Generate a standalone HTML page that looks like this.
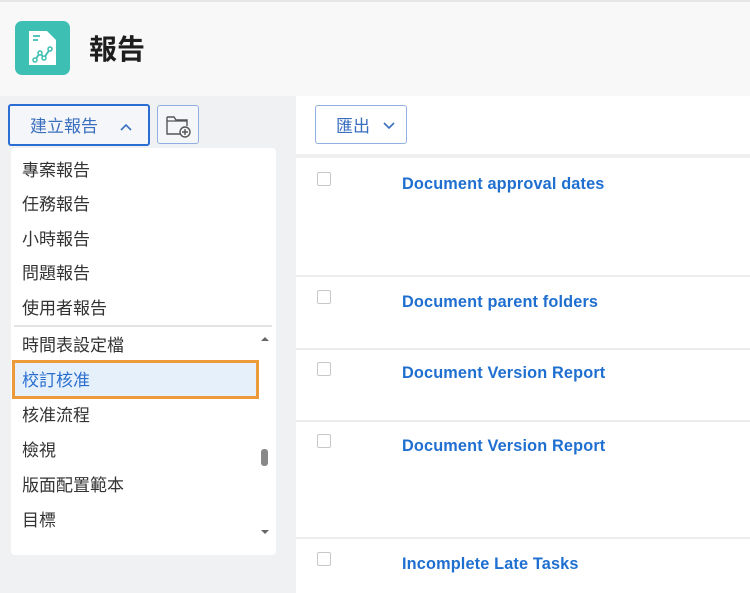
<!DOCTYPE html>
<html><head><meta charset="utf-8"><style>
*{margin:0;padding:0;box-sizing:border-box}
body{width:750px;height:593px;overflow:hidden;background:#f8f8f8;font-family:"Liberation Sans","Noto Sans CJK TC",sans-serif;position:relative}
.abs{position:absolute}
.top{left:0;top:0;width:750px;height:2px;background:#e6e6e6}
.logo{left:15px;top:21px;width:55px;height:54px;border-radius:7px;background:#3dbfb3}
.title{left:89px;top:28px;font-size:28px;font-weight:bold;color:#1e1e1e;font-family:"Noto Sans CJK TC",sans-serif;line-height:40px}
.left{left:0;top:96px;width:296px;height:497px;background:#f0f1f2}
.right{left:296px;top:96px;width:454px;height:497px;background:#fff}
.btn1{left:8px;top:104px;width:142px;height:42px;border:2px solid #2a6ed4;border-radius:3px;background:#f4f6f9;color:#3a6fc0;font-size:17px;font-family:"Noto Sans CJK TC",sans-serif;line-height:38px;padding-left:20px}
.btn2{left:157px;top:105px;width:42px;height:39px;border:1px solid #8fb0e0;border-radius:3px;background:#f4f6f9}
.btn3{left:315px;top:105px;width:92px;height:39px;border:1px solid #8fb0e0;border-radius:3px;background:#fff;color:#3a6fc0;font-size:17px;font-family:"Noto Sans CJK TC",sans-serif;line-height:37px;padding-left:20px}
.dd{left:11px;top:148px;width:265px;height:407px;background:#fff;border-radius:4px}
.it{position:absolute;left:22px;font-size:17px;color:#333;font-family:"Noto Sans CJK TC",sans-serif;line-height:20px}
.hl{left:12px;top:360px;width:247px;height:39px;background:#e6f0fb;border:3px solid #ec9a3a}
.line{left:296px;width:454px;height:2px;background:#ececec}
.cb{left:317px;width:14px;height:14px;border:1px solid #c8c8c8;border-radius:2px;background:#fff}
.lk{left:402px;font-size:16.3px;font-weight:bold;color:#1f6fd0;line-height:20px;letter-spacing:0.15px}
</style></head><body>
<div class="abs top"></div>
<div class="abs logo"><svg width="55" height="54" viewBox="0 0 55 54"><path d="M14 10h18l9 9v25H14z" fill="#fff"/><path d="M18 15h7M18 19h5" stroke="#3dbfb3" stroke-width="1.8"/><path d="M20 39l5-7 4 5 6-9" stroke="#3dbfb3" stroke-width="1.8" fill="none"/><circle cx="20" cy="39" r="2" fill="#fff" stroke="#3dbfb3" stroke-width="1.5"/><circle cx="25" cy="32" r="2" fill="#fff" stroke="#3dbfb3" stroke-width="1.5"/><circle cx="29" cy="37" r="2" fill="#fff" stroke="#3dbfb3" stroke-width="1.5"/><circle cx="35" cy="28" r="2" fill="#fff" stroke="#3dbfb3" stroke-width="1.5"/></svg></div>
<div class="abs title">報告</div>
<div class="abs left"></div>
<div class="abs right"></div>
<div class="abs btn1">建立報告<svg style="position:absolute;left:110px;top:17px" width="12" height="8"><path d="M1 7l5-5 5 5" stroke="#3a6fc0" stroke-width="1.6" fill="none"/></svg></div>
<div class="abs btn2"><svg width="42" height="39"><path d="M9 11h7l2 3h11v6M9 11v17h13" stroke="#555" stroke-width="1.4" fill="none"/><path d="M9 15h20" stroke="#555" stroke-width="1.2"/><circle cx="27" cy="26" r="5" stroke="#555" stroke-width="1.4" fill="#f4f6f9"/><path d="M27 23v6M24 26h6" stroke="#555" stroke-width="1.4"/></svg></div>
<div class="abs btn3">匯出<svg style="position:absolute;left:67px;top:16px" width="12" height="8"><path d="M1 1l5 5 5-5" stroke="#3a6fc0" stroke-width="1.6" fill="none"/></svg></div>
<div class="abs line" style="top:154px;height:4px;background:#efefef"></div>
<div class="abs line" style="top:275px"></div>
<div class="abs line" style="top:348px"></div>
<div class="abs line" style="top:420px"></div>
<div class="abs line" style="top:537px"></div>
<div class="abs cb" style="top:172px"></div><div class="abs lk" style="top:174px">Document approval dates</div>
<div class="abs cb" style="top:290px"></div><div class="abs lk" style="top:292px">Document parent folders</div>
<div class="abs cb" style="top:362px"></div><div class="abs lk" style="top:363px">Document Version Report</div>
<div class="abs cb" style="top:434px"></div><div class="abs lk" style="top:436px">Document Version Report</div>
<div class="abs cb" style="top:552px"></div><div class="abs lk" style="top:554px">Incomplete Late Tasks</div>
<div class="abs dd"></div>
<div class="abs hl"></div>
<div class="abs" style="left:14px;top:325px;width:258px;height:2px;background:#e4e4e4"></div>
<div class="it" style="top:159px">專案報告</div>
<div class="it" style="top:193px">任務報告</div>
<div class="it" style="top:228px">小時報告</div>
<div class="it" style="top:262px">問題報告</div>
<div class="it" style="top:297px">使用者報告</div>
<div class="it" style="top:334px">時間表設定檔</div>
<div class="it" style="top:369px;color:#2a6fd0">校訂核准</div>
<div class="it" style="top:404px">核准流程</div>
<div class="it" style="top:439px">檢視</div>
<div class="it" style="top:474px">版面配置範本</div>
<div class="it" style="top:509px">目標</div>
<svg class="abs" style="left:259px;top:335px" width="12" height="200"><path d="M2 6l4-4 4 4z" fill="#666"/><rect x="2" y="114" width="7" height="17" rx="3" fill="#888"/><path d="M2 195l4 4 4-4z" fill="#666"/></svg>
</body></html>
